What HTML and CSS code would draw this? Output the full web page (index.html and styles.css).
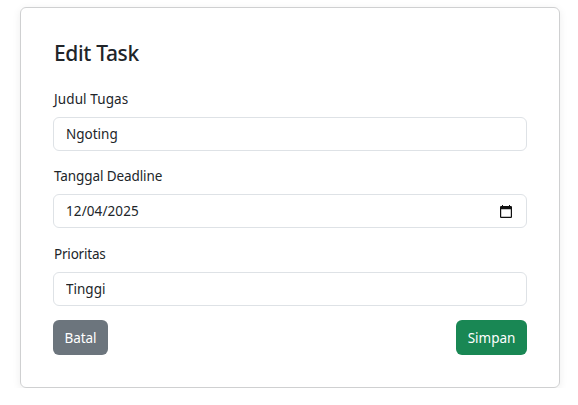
FILE: index.html
```html
<!DOCTYPE html>
<html lang="id">
<head>
<meta charset="utf-8">
<title>Edit Task</title>
<link rel="stylesheet" href="styles.css">
</head>
<body>
<main class="card">
  <h1 class="title">Edit Task</h1>
  <form>
    <div class="field">
      <label class="label judul" for="judul">Judul Tugas</label>
      <div class="control"><input class="input" id="judul" type="text" value="Ngoting"></div>
    </div>
    <div class="field field-date">
      <label class="label tanggal" for="tanggal">Tanggal Deadline</label>
      <div class="control">
        <input class="input date" id="tanggal" type="text" value="12/04/2025">
        <svg class="calendar" width="12" height="13" viewBox="0 0 12 13" aria-hidden="true">
          <path d="M2 0h1v1h6V0h1v1h1.2l.8.8v10.4l-.8.8H.8l-.8-.8V1.8L.8 1H2zM1.2 4.3v7.5h9.6V4.3z" fill="#111" fill-rule="evenodd"/>
        </svg>
      </div>
    </div>
    <div class="field">
      <label class="label prioritas" for="prioritas">Prioritas</label>
      <div class="control"><input class="input" id="prioritas" type="text" value="Tinggi"></div>
    </div>
    <div class="actions">
      <button class="btn cancel" type="button">Batal</button>
      <button class="btn save" type="button">Simpan</button>
    </div>
  </form>
</main>
</body>
</html>
```
FILE: styles.css
```css
* { box-sizing: border-box; }
body {
  margin: 0;
  padding: 7px 18px 0 20px;
  background: #fff;
  color: #212529;
  font-family: "Noto Sans", "Open Sans", sans-serif;
  font-size: 13.5px;
  overflow: hidden;
}
.card {
  height: 381px;
  padding: 32px;
  border: 1px solid #cfd0d1;
  border-radius: 6px;
  box-shadow: 0 2px 8px rgba(0, 0, 0, .075);
}
.title {
  margin: 0 0 20px;
  padding-left: 1px;
  font-size: 21px;
  line-height: 27px;
  font-weight: 500;
  letter-spacing: -.35px;
}
.field { margin-bottom: 14px; }
.field-date { margin-bottom: 15px; }
.label {
  display: block;
  height: 21px;
  margin-bottom: 9px;
  padding-left: 1px;
  line-height: 24px;
}
.field + .field .label {
  height: 20px;
  line-height: 22px;
}
.judul { letter-spacing: .1px; }
.tanggal { letter-spacing: -.1px; }
.prioritas { letter-spacing: -.2px; }
.control {
  display: flex;
  align-items: center;
  height: 34px;
  padding: 0 14px 0 12px;
  border: 1px solid #dee2e6;
  border-radius: 6px;
}
.input {
  flex: 1;
  min-width: 0;
  height: 30px;
  padding: 0;
  border: 0;
  outline: 0;
  background: none;
  color: inherit;
  font: inherit;
}
.date { letter-spacing: .1px; }
.actions {
  display: flex;
  justify-content: space-between;
}
.btn {
  height: 35px;
  padding: 1px 0 0;
  border: 0;
  border-radius: 6px;
  color: #fff;
  font: inherit;
}
.cancel { width: 55px; background: #6c757d; letter-spacing: -.1px; }
.save { width: 71px; background: #198754; }
```
